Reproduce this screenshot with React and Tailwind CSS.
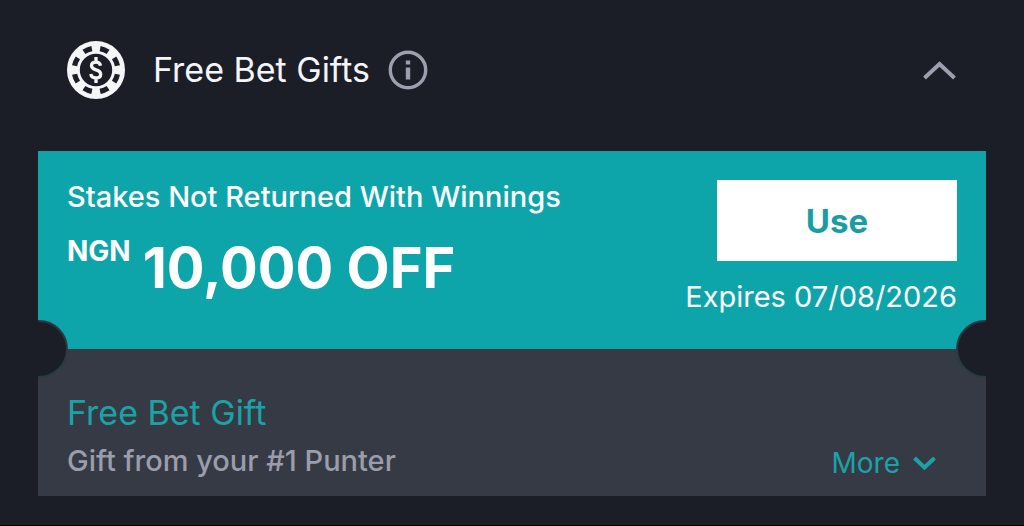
function ChipIcon() {
  return (
    <svg className="size-[58px] shrink-0" viewBox="0 0 58 58" fill="none" aria-hidden="true">
      <circle cx="29" cy="29" r="22.6" stroke="#f4f5f7" strokeWidth="12.8" />
      <circle
        cx="29"
        cy="29"
        r="21.8"
        stroke="#1b1e26"
        strokeWidth="5.2"
        pathLength="80"
        strokeDasharray="5 5"
        strokeDashoffset="-2.5"
      />
      <path
        d="M33.5 24.8C33.1 22.4 31.5 21.2 29 21.2C26.4 21.2 24.5 22.5 24.5 24.8C24.5 27.2 26.5 28.1 29 28.9C31.7 29.7 33.7 30.7 33.7 33.2C33.7 35.6 31.8 36.9 29 36.9C26 36.9 24.2 35.5 23.8 33M29 16V21M29 37V42"
        stroke="#f4f5f7"
        strokeWidth="3.3"
      />
    </svg>
  );
}

function InfoIcon() {
  return (
    <svg className="size-10" viewBox="0 0 40 40" fill="none" aria-hidden="true">
      <circle cx="20" cy="20" r="17.7" stroke="#9c9fae" strokeWidth="3.4" />
      <path d="M17.8 10.5H22.2V14.5H17.8ZM17.8 17.5H22.2V29.5H17.8Z" fill="#9c9fae" />
    </svg>
  );
}

export default function App() {
  return (
    <main className="min-h-screen border-b border-black bg-[#1b1e26] px-[38px] pb-[29px] font-['Inter',sans-serif]">
      <header className="flex h-[151px] items-start justify-between px-[29px] pt-10">
        <div className="flex h-[60px] items-center">
          <ChipIcon />
          <h1 className="ml-7 text-[34px] leading-10 text-[#f4f5fb]">Free Bet Gifts</h1>
          <button type="button" aria-label="About free bet gifts" className="ml-[18px]">
            <InfoIcon />
          </button>
        </div>
        <button type="button" aria-label="Collapse" className="flex h-[60px] items-center">
          <svg className="h-6 w-9" viewBox="0 0 36 24" fill="none" aria-hidden="true">
            <path d="M3.5 20L18.5 6L33.5 20" stroke="#9c9fae" strokeWidth="4" />
          </svg>
        </button>
      </header>

      <article className="relative overflow-hidden bg-[#363a44]">
        <section className="flex h-[198px] items-start justify-between bg-[#0ea5aa] px-[29px] pt-[29px] text-white">
          <div>
            <p className="text-[29px] leading-[34px] font-medium">Stakes Not Returned With Winnings</p>
            <p className="mt-4 flex items-start font-bold">
              <span className="text-[28px] leading-[42px]">NGN</span>
              <span className="ml-3 pt-2 text-[56px] leading-[60px]">10,000 OFF</span>
            </p>
          </div>
          <div className="flex flex-col items-end">
            <button type="button" className="h-[81px] w-60 bg-white pt-[2px] text-[33px] font-bold text-[#199da3]">
              Use
            </button>
            <p className="mt-[18px] text-[29px] leading-9">Expires 07/08/2026</p>
          </div>
        </section>

        <section className="flex items-end justify-between pr-[50px] pb-4 pl-[29px] pt-11">
          <div>
            <h2 className="text-[34px] leading-10 text-[#1aa3a7]">Free Bet Gift</h2>
            <p className="mt-2 text-[29px] leading-[39px] font-medium text-[#9a9dab]">Gift from your #1 Punter</p>
          </div>
          <button type="button" className="flex items-center gap-3 text-[28px] leading-[34px] text-[#1aa3a7]">
            More
            <svg className="h-5 w-6" viewBox="0 0 24 20" fill="none" aria-hidden="true">
              <path d="M2.5 5L12.5 14.5L22.5 5" stroke="#1aa3a7" strokeWidth="4" />
            </svg>
          </button>
        </section>

        <span className="absolute top-[169px] -left-7 size-[58px] rounded-full border-2 border-[#2a3a44] bg-[#1b1e26]" />
        <span className="absolute top-[169px] -right-7 size-[58px] rounded-full border-2 border-[#2a3a44] bg-[#1b1e26]" />
      </article>
    </main>
  );
}
